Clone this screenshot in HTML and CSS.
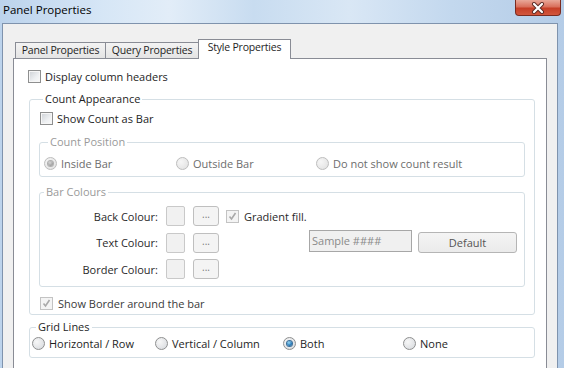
FILE: index.html
```html
<!DOCTYPE html>
<html lang="en">
<head>
<meta charset="UTF-8">
<title>Panel Properties</title>
<link rel="stylesheet" href="styles.css">
</head>
<body>
<div class="titlebar">
    <span class="title">Panel Properties</span>
    <div class="close">
        <svg width="14" height="12" viewBox="0 0 14 12">
            <path d="M3 2 L11 10 M11 2 L3 10" stroke="#5a2a24" stroke-width="4" stroke-linecap="round"/>
            <path d="M3 2 L11 10 M11 2 L3 10" stroke="#fff" stroke-width="2.2" stroke-linecap="round"/>
        </svg>
    </div>
</div>
<div class="client">
    <div class="tabs">
        <div class="tab tab-panel">Panel Properties</div>
        <div class="tab tab-query">Query Properties</div>
        <div class="tab tab-style active">Style Properties</div>
    </div>
    <div class="panel">
        <div class="row"><span class="check"></span>Display column headers</div>

        <fieldset class="group count-group">
            <legend>Count Appearance</legend>
            <div class="row show-bar"><span class="check"></span>Show Count as Bar</div>

            <fieldset class="group sub position-group">
                <legend class="dim">Count Position</legend>
                <div class="radios position-radios">
                    <div class="radio-item off"><span class="radio checked"></span>Inside Bar</div>
                    <div class="radio-item off"><span class="radio"></span>Outside Bar</div>
                    <div class="radio-item off"><span class="radio"></span>Do not show count result</div>
                </div>
            </fieldset>

            <fieldset class="group sub colours-group">
                <legend class="dim">Bar Colours</legend>
                <div class="colour-grid">
                    <div class="colour-label">Back Colour:</div>
                    <div class="swatch"></div>
                    <div class="pick">...</div>
                    <div class="row gradient"><span class="check ticked"></span>Gradient fill.</div>

                    <div class="colour-label">Text Colour:</div>
                    <div class="swatch"></div>
                    <div class="pick">...</div>
                    <div class="sample-row">
                        <div class="sample">Sample ####</div>
                        <div class="default-btn">Default</div>
                    </div>

                    <div class="colour-label">Border Colour:</div>
                    <div class="swatch"></div>
                    <div class="pick">...</div>
                    <div></div>
                </div>
            </fieldset>

            <div class="row show-border"><span class="check ticked"></span>Show Border around the bar</div>
        </fieldset>

        <fieldset class="group grid-group">
            <legend>Grid Lines</legend>
            <div class="radios grid-radios">
                <div class="radio-item"><span class="radio"></span>Horizontal / Row</div>
                <div class="radio-item"><span class="radio"></span>Vertical / Column</div>
                <div class="radio-item"><span class="radio checked"></span>Both</div>
                <div class="radio-item"><span class="radio"></span>None</div>
            </div>
        </fieldset>
    </div>
</div>
</body>
</html>
```

FILE: styles.css
```css
body {
    margin: 0;
    width: 564px;
    height: 368px;
    overflow: hidden;
    font-family: "Open Sans", "Liberation Sans", sans-serif;
    font-size: 11px;
    color: #1e1e1e;
    background: linear-gradient(90deg, #bcd3ec 0%, #d6e6f6 18%, #e2edf8 30%, #c8dcf0 45%, #d9e7f5 62%, #c3d8ee 80%, #b4cce7 100%);
}
.titlebar {
    height: 23px;
    display: flex;
    justify-content: space-between;
    align-items: flex-start;
    padding: 0 3px 0 3px;
}
.title {
    font-size: 11.5px;
    line-height: 20px;
    color: #000;
}
.close {
    width: 46px;
    height: 16px;
    box-sizing: border-box;
    border: 1px solid #7a2b20;
    border-top: 0;
    border-radius: 0 0 4px 4px;
    background: linear-gradient(#e9a899 0%, #d9705c 45%, #c63f27 55%, #d2563d 100%);
    display: flex;
    justify-content: center;
    align-items: center;
}
.client {
    margin: 0 6px 0 2px;
    border: 1px solid #7f93ad;
    border-bottom: 0;
    background: #f0f0f0;
    padding: 15px 10px 0 10px;
    height: 329px;
}
.tabs {
    display: flex;
    align-items: flex-end;
    height: 19px;
    padding-left: 2px;
}
.tab {
    box-sizing: border-box;
    height: 16px;
    border: 1px solid #898c95;
    border-bottom: 0;
    margin-right: -1px;
    background: linear-gradient(#f3f3f3, #e4e4e4);
    display: flex;
    justify-content: center;
    align-items: center;
    padding-bottom: 1px;
    font-size: 10.5px;
    letter-spacing: -0.2px;
    white-space: nowrap;
}
.tab-panel { width: 91px; }
.tab-query { width: 94px; }
.tab-style { width: 93px; }
.tab.active {
    height: 20px;
    margin-bottom: -1px;
    background: #fff;
    position: relative;
    z-index: 1;
    align-items: flex-start;
    padding: 0;
}
.panel {
    background: #fff;
    border: 1px solid #898c95;
    border-bottom: 0;
    padding: 10px 11px 0 14px;
    height: 300px;
}
.row {
    display: flex;
    align-items: center;
    gap: 4px;
    height: 15px;
    white-space: nowrap;
}
.check {
    box-sizing: border-box;
    width: 13px;
    height: 13px;
    border: 1px solid #8e8f8f;
    background: linear-gradient(135deg, #cdd0d5 0%, #eef0f2 60%, #fafafa 100%);
    box-shadow: inset 0 0 0 1px #f6f6f6;
    flex: none;
}
.check.ticked {
    border-color: #c3c3c3;
    background: #f4f4f4 url("data:image/svg+xml;utf8,<svg xmlns='http://www.w3.org/2000/svg' width='11' height='11'><path d='M2.5 5.5 L4.5 8 L8.5 2' fill='none' stroke='%23a9a9a9' stroke-width='1.6'/></svg>") no-repeat center;
    box-shadow: none;
}
.group {
    border: 1px solid #d5dfe5;
    border-radius: 3px;
    margin: 0;
    min-width: 0;
}
.group legend {
    padding: 0 2px;
    margin-left: 4px;
    line-height: 14px;
}
.group legend.dim {
    color: #9a9a9a;
}
.count-group {
    margin: 8px 0 0 1px;
    padding: 0 9px 3px 9px;
}
.show-bar {
    margin-top: 5px;
    padding-left: 1px;
}
.sub {
    margin-top: 9px;
    padding: 0;
}
.position-group {
    padding: 7px 0 5px 4px;
}
.radios {
    display: grid;
    height: 15px;
    align-items: center;
}
.position-radios {
    grid-template-columns: 132px 140px 1fr;
}
.radio-item {
    display: flex;
    align-items: center;
    gap: 4px;
    white-space: nowrap;
}
.radio-item.off {
    color: #6d6d6d;
}
.radio {
    box-sizing: border-box;
    width: 13px;
    height: 13px;
    border-radius: 50%;
    border: 1px solid #8e8f8f;
    background: radial-gradient(circle at 35% 35%, #f7f7f7 0%, #dfe1e4 70%, #c9ccd1 100%);
    display: flex;
    justify-content: center;
    align-items: center;
    flex: none;
}
.radio-item.off .radio {
    border-color: #bdbdbd;
    background: radial-gradient(circle at 35% 35%, #f6f6f6 0%, #e6e6e6 70%, #d6d6d6 100%);
}
.radio.checked::after {
    content: "";
    width: 5px;
    height: 5px;
    border-radius: 50%;
    background: radial-gradient(circle at 40% 35%, #9fdcf6 0%, #2b7fbd 55%, #124d86 100%);
    box-shadow: 0 0 0 1px #3c6f99;
}
.radio-item.off .radio.checked::after {
    background: radial-gradient(circle at 40% 35%, #d8d8d8 0%, #a4a4a4 60%, #8c8c8c 100%);
    box-shadow: 0 0 0 1px #b0b0b0;
}
.colours-group {
    margin-top: 8px;
    padding: 7px 0 7px 0;
}
.colour-grid {
    display: grid;
    grid-template-columns: 118px 19px 26px 1fr;
    grid-auto-rows: 20px;
    column-gap: 8px;
    row-gap: 6.5px;
    align-items: center;
}
.colour-label {
    text-align: right;
    color: #2a2a2a;
    white-space: nowrap;
}
.swatch {
    box-sizing: border-box;
    height: 20px;
    border: 1px solid #c9c9c9;
    border-radius: 2px;
    background: #f1f1f1;
}
.pick {
    box-sizing: border-box;
    height: 20px;
    border: 1px solid #bfbfbf;
    border-radius: 3px;
    background: #f4f4f4;
    color: #7a7a7a;
    font-size: 10px;
    line-height: 15px;
    text-align: center;
}
.gradient {
    margin-left: -1px;
    gap: 5px;
    color: #2a2a2a;
}
.sample-row {
    display: flex;
    align-items: center;
    gap: 6px;
    margin-left: 82px;
}
.sample {
    box-sizing: border-box;
    width: 103px;
    height: 22px;
    border: 1px solid #a7a7a7;
    background: #f0f0f0;
    color: #8a8a8a;
    line-height: 20px;
    padding-left: 2px;
    margin-top: -4px;
}
.default-btn {
    box-sizing: border-box;
    width: 99px;
    height: 21px;
    border: 1px solid #b5b5b5;
    border-radius: 3px;
    background: linear-gradient(#f4f4f4, #ebebeb);
    color: #555;
    line-height: 19px;
    text-align: center;
    margin-top: -1px;
}
.show-border {
    margin-top: 9px;
    padding-left: 1px;
    gap: 5px;
    color: #3a3a3a;
}
.grid-group {
    margin: 5px 0 0 1px;
    padding: 2px 0 6px 2px;
}
.grid-radios {
    grid-template-columns: 123px 128px 120px 1fr;
}
```
